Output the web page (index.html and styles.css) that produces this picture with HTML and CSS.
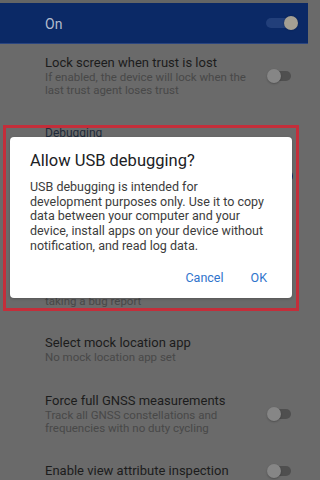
FILE: index.html
```html
<!DOCTYPE html>
<html>
<head>
<meta charset="utf-8">
<link rel="stylesheet" href="styles.css">
</head>
<body>
<div class="screen">
  <div class="topstrip"></div>
  <div class="switchbar">
    <span class="on-label">On</span>
    <span class="toggle toggle-on"><span class="track"></span><span class="thumb"></span></span>
  </div>
  <div class="list">
    <div class="row row-lock">
      <div class="texts">
        <div class="title">Lock screen when trust is lost</div>
        <div class="sub">If enabled, the device will lock when the<br>last trust agent loses trust</div>
      </div>
      <span class="toggle toggle-off"><span class="track"></span><span class="thumb"></span></span>
    </div>
    <div class="row row-cat">
      <div class="cat">Debugging</div>
    </div>
    <div class="row row-usb">
      <div class="texts"></div>
      <span class="toggle toggle-blue"><span class="track"></span><span class="thumb"></span></span>
    </div>
    <div class="row row-revoke"></div>
    <div class="row row-bug">
      <div class="texts">
        <div class="sub">taking a bug report</div>
      </div>
    </div>
    <div class="row row-mock">
      <div class="texts">
        <div class="title">Select mock location app</div>
        <div class="sub">No mock location app set</div>
      </div>
    </div>
    <div class="row row-gnss">
      <div class="texts">
        <div class="title">Force full GNSS measurements</div>
        <div class="sub">Track all GNSS constellations and<br>frequencies with no duty cycling</div>
      </div>
      <span class="toggle toggle-off"><span class="track"></span><span class="thumb"></span></span>
    </div>
    <div class="row row-enable">
      <div class="texts">
        <div class="title">Enable view attribute inspection</div>
      </div>
      <span class="toggle toggle-off"><span class="track"></span><span class="thumb"></span></span>
    </div>
  </div>

  <div class="highlight"></div>

  <div class="dialog">
    <div class="dlg-title">Allow USB debugging?</div>
    <div class="dlg-body">USB debugging is intended for development purposes only. Use it to copy data between your computer and your device, install apps on your device without notification, and read log data.</div>
    <div class="dlg-actions">
      <span class="btn">Cancel</span>
      <span class="btn">OK</span>
    </div>
  </div>
</div>
</body>
</html>
```

FILE: styles.css
```css
html, body {
  margin: 0;
  padding: 0;
  background: #6a6a6a;
}
body {
  font-family: Roboto, "Noto Sans", "Liberation Sans", sans-serif;
}
.screen {
  position: relative;
  width: 308px;
  height: 480px;
  overflow: hidden;
  background: #6a6a6a;
}
.topstrip {
  height: 3px;
  background: #646565;
}
.switchbar {
  height: 40px;
  background: #0b2966;
  border-bottom: 1px solid #2a4580;
  display: flex;
  align-items: center;
  padding: 0 10px 0 45px;
}
.on-label {
  flex: 1;
  font-size: 14px;
  color: #b3bccd;
  margin-top: 1px;
}
.toggle {
  position: relative;
  display: block;
  width: 26px;
  height: 14px;
  flex: none;
}
.toggle .track {
  position: absolute;
  left: 2px;
  right: 2px;
  top: 2px;
  height: 10px;
  border-radius: 5px;
}
.toggle .thumb {
  position: absolute;
  top: 0;
  width: 14px;
  height: 14px;
  border-radius: 50%;
}
.toggle-on .track { background: #223f7a; left: -6px; }
.toggle-on .thumb { right: 0; background: #a49f93; box-shadow: 0 0 2px rgba(0,0,0,0.3); }
.toggle-off .track { background: #4f4f4f; }
.toggle-off .thumb { left: 0; background: #868686; box-shadow: 0 1px 2px rgba(0,0,0,0.25); }
.toggle-blue .track { background: #1e3570; }
.toggle-blue .thumb { right: 0; background: #13296a; }

.row {
  display: flex;
  align-items: center;
  padding: 0 15px 0 45px;
  box-sizing: border-box;
}
.texts { flex: 1; }
.title {
  font-size: 13px;
  line-height: 16px;
  color: #1c1c1c;
}
.sub {
  font-size: 11.5px;
  line-height: 12.7px;
  color: #484848;
}
.cat {
  font-size: 12px;
  line-height: 14px;
  color: #1f2a3a;
}
.row-lock { height: 67px; align-items: flex-start; padding-top: 11px; }
.row-lock .toggle { margin-top: 14px; }
.row-cat { height: 36px; align-items: flex-start; padding-top: 15px; }
.row-usb { height: 57px; }
.row-revoke { height: 48px; }
.row-bug { height: 68px; align-items: flex-start; padding-top: 43px; }
.row-mock { height: 59px; }
.row-gnss { height: 70px; }
.row-enable { height: 44px; }

.highlight {
  position: absolute;
  left: 3px;
  top: 125px;
  width: 290px;
  height: 180px;
  border: 3px solid #c42e3a;
}

.dialog {
  position: absolute;
  left: 10px;
  top: 137px;
  width: 282px;
  height: 161px;
  box-sizing: border-box;
  background: #ffffff;
  border-radius: 4px;
  padding: 14px 20px 0 20px;
  box-shadow: 0 1px 3px rgba(0,0,0,0.2);
}
.dlg-title {
  font-size: 16.5px;
  line-height: 20px;
  color: #202124;
}
.dlg-body {
  margin-top: 9px;
  font-size: 12.5px;
  line-height: 14.7px;
  color: #3c3c3c;
}
.dlg-actions {
  margin-top: 16px;
  display: flex;
  justify-content: flex-end;
  gap: 27px;
  padding-right: 5px;
}
.btn {
  font-size: 12.5px;
  line-height: 15px;
  color: #2f74cc;
}
```
